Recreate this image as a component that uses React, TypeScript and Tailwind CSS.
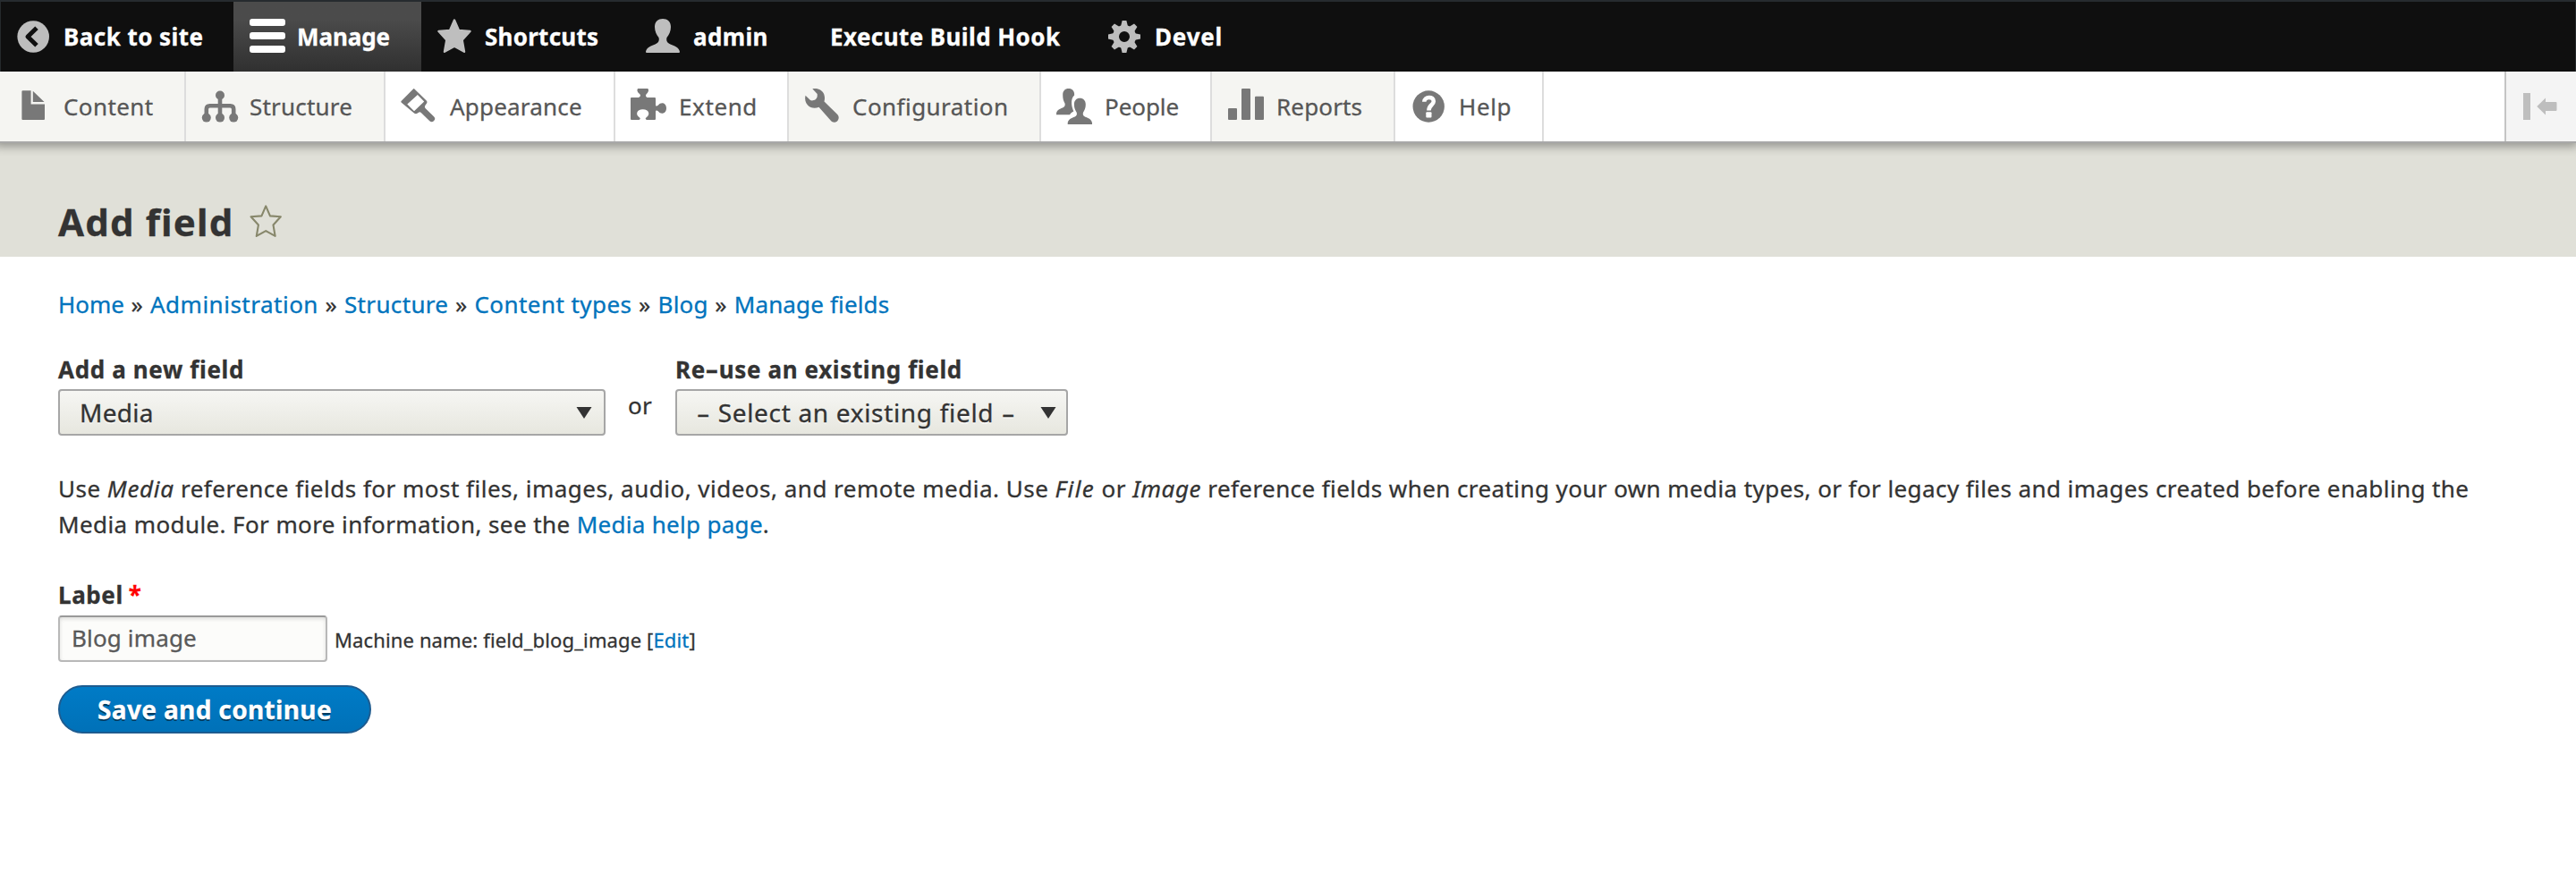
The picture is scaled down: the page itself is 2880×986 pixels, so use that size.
import type { ReactNode } from "react";

const Icon = ({ children, className = "" }: { children: ReactNode; className?: string }) => (
  <svg viewBox="0 0 40 40" className={"ml-[17px] mr-[14px] size-10 shrink-0 overflow-visible " + className} fill="currentColor">
    {children}
  </svg>
);

const STAR = "M20 1.5L25 13L37.5 14L28.7 23.6L31 36.8L20 30.6L9 36.8L11.3 23.6L2.5 14L15 13Z";

const bar = [
  {
    text: "Back to site",
    box: "w-[261px]",
    track: "tracking-[0.45px]",
    icon: (
      <Icon className="text-[#bebebe]">
        <circle cx="20.2" cy="20" r="17.8" />
        <path d="M24 10.3L14 20L24 29.7" fill="none" stroke="#0f0f0f" strokeWidth="5" strokeLinejoin="round" />
      </Icon>
    ),
  },
  {
    text: "Manage",
    box: "w-[210px] bg-linear-to-b from-[#4b4b4b] from-25% to-[#303030]",
    track: "tracking-[-0.1px]",
    icon: (
      <Icon>
        <rect x="1" y="0" width="40" height="8" rx="3" />
        <rect x="1" y="15" width="40" height="8" rx="3" />
        <rect x="1" y="30" width="40" height="8" rx="3" />
      </Icon>
    ),
  },
  {
    text: "Shortcuts",
    box: "w-[233px]",
    track: "tracking-[0.25px]",
    icon: (
      <Icon className="text-[#bebebe]">
        <path d={STAR} stroke="currentColor" strokeWidth="2.4" strokeLinejoin="round" />
      </Icon>
    ),
  },
  {
    text: "admin",
    box: "w-[187px]",
    track: "tracking-[0.34px]",
    icon: (
      <Icon className="text-[#bebebe]">
        <path d="M20 0c5 0 9 3 9 9c0 5-2 9-4.5 12c-.8 3 0 6 4 7.5c5 1.8 10 4 10.5 8.5q0 1-1 1H2q-1 0-1-1c.5-4.5 5.5-6.7 10.5-8.5c4-1.5 4.8-4.5 4-7.5C13 18 11 14 11 9c0-6 4-9 9-9z" />
      </Icon>
    ),
  },
  { text: "Execute Build Hook", box: "w-[329px] pl-[37px]", track: "tracking-[0.42px]", icon: null },
  {
    text: "Devel",
    box: "w-[180px]",
    track: "tracking-[0.8px]",
    icon: (
      <Icon className="text-[#bebebe]">
        <circle cx="20" cy="20" r="9.5" fill="none" stroke="currentColor" strokeWidth="7" />
        {[0, 45, 90, 135, 180, 225, 270, 315].map((a) => (
          <path key={a} d="M17.6 2H22.4L24.2 9.5H15.8Z" transform={`rotate(${a} 20 20)`} />
        ))}
      </Icon>
    ),
  },
];

const tray = [
  {
    text: "Content",
    box: "w-[208px] bg-[#f5f5f2]",
    track: "tracking-[0.4px]",
    icon: (
      <Icon>
        <path d="M7.4 3.3q0-1 1-1H17.6V17.5H33V34q0 1-1 1H8.4q-1 0-1-1ZM19.8 2.7L32.5 15H19.8Z" />
      </Icon>
    ),
  },
  {
    text: "Structure",
    box: "w-[223px] bg-[#f5f5f2]",
    track: "tracking-[0.2px]",
    icon: (
      <Icon>
        <circle cx="21" cy="7.5" r="5" />
        <circle cx="5.8" cy="32.6" r="5" />
        <circle cx="21" cy="32.6" r="5" />
        <circle cx="36.2" cy="32.6" r="5" />
        <path d="M21 8V32M5.8 31V23q0-3.8 3.8-3.8H32.4q3.8 0 3.8 3.8V31" fill="none" stroke="currentColor" strokeWidth="4.6" />
      </Icon>
    ),
  },
  {
    text: "Appearance",
    box: "w-[257px]",
    track: "pl-[1px] tracking-[0.2px]",
    icon: (
      <Icon>
        <path
          fillRule="evenodd"
          d="M14 .4q.7-.7 1.4 0L29 13.7q1 1.2 .2 2.6L27 19.6Q26.600 21 27.500 22L37 31.200A3.300 3.300 0 0 1 32.300 36.200L22.800 27Q21.500 25.800 20 26.700Q17.500 29 15.300 27.700L.6 15.500Q-.1 14.800 .6 14.100ZM18.900 6.900L7.300 17.600L15 25.200L26.200 14.500Z"
        />
      </Icon>
    ),
  },
  {
    text: "Extend",
    box: "w-[194px]",
    track: "tracking-[0.6px]",
    icon: (
      <Icon>
        <path d="M0 11q0-1 1-1H9C11.500 9 11.500 7 9.500 5.500C7 3.500 7 .5 8.500 0H19C20.500 .5 20.500 3.500 18.300 5.500C16.500 7 16.500 9 18.500 10H27q1 0 1 1V18c0 2 1.500 2 3 .5c3-4 9-2.500 9 3.500s-6 7.500-9 3.500c-1.500-1.500-3-1.500-3 .5V34q0 1-1 1H18C16 34 16.500 33 18 32C22 29.500 21 23.300 13.700 23.300S5.500 29.500 9.500 32C11 33 11.500 34 9.500 35H1q-1 0-1-1z" />
      </Icon>
    ),
  },
  {
    text: "Configuration",
    box: "w-[282px] bg-[#f5f5f2]",
    track: "tracking-[0.45px]",
    icon: (
      <Icon>
        <path d="M9.300 .3C15-1 20.500 1.500 22.300 6.500C23.300 9.500 23.200 12 22.500 14.500L37.300 29C39.500 31.300 39 35 36.700 36.700C34.500 38.300 31.500 37.800 30 36L16.500 20.800C12 22.500 7 21.800 4 18.500C1.500 16 .5 11.500 1.500 7.700L7 13C8.500 13.800 11 13.300 12.700 12.300C14.500 10.800 15 9 14.700 6z" />
      </Icon>
    ),
  },
  {
    text: "People",
    box: "w-[191px]",
    track: "tracking-[-0.06px]",
    icon: (
      <Icon>
        <path d="M26.300 10.700c4 0 6.500 2.700 6.500 7c0 4-1.200 6.500-2.800 9c-.6 2-.3 3.800 2.500 5c4 1.500 7.200 3 7.500 7V40H12.700V38.700c.3-4 3.500-5.500 7.500-7c2.800-1.200 3.100-3 2.500-5c-1.600-2.500-2.800-5-2.800-9c0-4.300 2.400-7 6.400-7z" />
        <path d="M13.700 0c4 0 6.400 2.700 6.400 6v1.500c-2.300 2.300-3.300 5-3 9.500c.2 3 1 5.500 2.200 8.500c-2 1-3 2-4.300 3.800H0V28c.3-3.500 3-5 7-6.500c2.800-1.200 3-3 2.500-5c-1.500-2.500-2.300-5-2.300-9.500c0-4.300 2.400-7 6.500-7z" />
      </Icon>
    ),
  },
  {
    text: "Reports",
    box: "w-[205px] bg-[#f5f5f2]",
    track: "pl-[1px] tracking-[0.15px]",
    icon: (
      <Icon>
        <rect x="1" y="22" width="10" height="13" rx="1" />
        <rect x="16" y="0" width="10" height="35" rx="1" />
        <rect x="31" y="8.700" width="10" height="26.300" rx="1" />
      </Icon>
    ),
  },
  {
    text: "Help",
    box: "w-[166px]",
    track: "tracking-[0.62px]",
    icon: (
      <Icon>
        <circle cx="20.200" cy="20" r="17.700" />
        <path d="M15.300 14.800C15.500 8.500 25.800 8.300 25.800 14.300C25.800 18.300 20.400 18.500 20.400 24.500" fill="none" stroke="#fff" strokeWidth="4.600" />
        <rect x="17.300" y="26.200" width="6.200" height="6.400" rx="1" fill="#fff" />
      </Icon>
    ),
  },
];

const crumbs = [
  { text: "Home", track: "tracking-[0px]" },
  { text: "Administration", track: "tracking-[0.5px]" },
  { text: "Structure", track: "tracking-[0.35px]" },
  { text: "Content types", track: "tracking-[0.45px]" },
  { text: "Blog", track: "tracking-[0.2px]" },
  { text: "Manage fields", track: "tracking-[0.15px]" },
];

const Arrow = () => (
  <svg viewBox="0 0 18 14" className="h-[14px] w-[18px] shrink-0" fill="#333">
    <path d="M.5 1H17.500L9 14Z" />
  </svg>
);

const Hyphen = ({ className }: { className: string }) => <span className={"inline-block scale-x-[1.65] " + className}>-</span>;

const Select = ({ className, children }: { className: string; children: ReactNode }) => (
  <div
    className={
      "flex h-[52px] items-center justify-between rounded-[4px] border-2 border-[#a6a6a6] bg-linear-to-b from-[#f6f6f3] to-[#e7e7df] text-[28px] leading-[48px] [text-shadow:0_2px_rgba(255,255,255,0.6)] " +
      className
    }
  >
    {children}
    <Arrow />
  </div>
);

export default function App() {
  return (
    <div className="h-[986px] w-[2880px] overflow-hidden bg-white font-['Noto_Sans','Open_Sans',sans-serif] text-[26px] leading-[40px] text-[#333] [-webkit-text-stroke:0.3px]">
      <nav className="flex h-20 border-t-2 border-[#262b2f] bg-[#0f0f0f] font-bold whitespace-nowrap text-white shadow-[inset_1px_0_0_#25292c,inset_-1px_0_0_#25292c]">
        {bar.map((b) => (
          <div key={b.text} className={"flex items-center " + b.box}>
            {b.icon}
            <span className={b.track}>{b.text}</span>
          </div>
        ))}
      </nav>
      <nav className="relative flex h-20 border-b-2 border-[#a8a8a8] bg-white whitespace-nowrap text-[#565656] shadow-[-2px_0_10px_4px_rgba(0,0,0,0.333)] [clip-path:inset(0_0_-30px_0)]">
        {tray.map((t) => (
          <div key={t.text} className={"flex items-center border-r-2 border-[#dddddd] " + t.box}>
            <div className="text-[#787878]">{t.icon}</div>
            <span className={t.track}>{t.text}</span>
          </div>
        ))}
        <div className="ml-auto flex w-20 items-center border-l-2 border-[#c4c4c4] bg-[#f4f4f4] pl-[19px]">
          <svg viewBox="0 0 40 30" className="h-[30px] w-10" fill="#bebebe">
            <path d="M0 0H8V30H0ZM15.300 15L25 5.500V10H36.500q1 0 1 1V19q0 1-1 1H25V24.500Z" />
          </svg>
        </div>
      </nav>

      <header className="flex h-[127px] items-center bg-[#e0e0d8] pt-[49px] pl-[65px]">
        <h1 className="text-[42px] leading-[50px] font-bold tracking-[1.15px]">Add field</h1>
        <svg viewBox="0 0 40 40" className="ml-[16px] size-10 overflow-visible" fill="none">
          <path d={STAR} transform="translate(1.200 1) scale(.95)" stroke="#87876b" strokeWidth="2.200" strokeLinejoin="round" />
        </svg>
      </header>

      <main className="px-[65px] pt-[33px]">
        <div className="whitespace-nowrap">
          {crumbs.map((c, i) => (
            <span key={c.text}>
              {i > 0 && <span className="tracking-[0.75px]"> » </span>}
              <a className={"text-[#0074bd] " + c.track}>{c.text}</a>
            </span>
          ))}
        </div>

        <div className="mt-[33px] flex">
          <div>
            <div className="h-[42px] font-bold tracking-[0.64px]">Add a new field</div>
            <Select className="w-[612px] pr-[13px] pl-[22px]">
              <span className="tracking-[0.3px]">Media</span>
            </Select>
          </div>
          <div className="mt-[40px] ml-[25px] w-[53px] tracking-[0.3px]">or</div>
          <div>
            <div className="h-[42px] font-bold tracking-[0.62px]">
              Re
              <Hyphen className="mx-[3px]" />
              use an existing field
            </div>
            <Select className="w-[439px] pr-[11px] pl-[25px]">
              <span className="tracking-[0.68px] whitespace-nowrap">
                <Hyphen className="mr-[3px]" /> Select an existing field <Hyphen className="ml-[4px]" />
              </span>
            </Select>
          </div>
        </div>

        <p className="mt-[39px] tracking-[0.49px] whitespace-nowrap">
          Use <em className="tracking-[0.7px]">Media</em> reference fields for most files, images, audio, videos, and remote media. Use{" "}
          <em className="tracking-[1.5px]">File</em> or <em className="tracking-[0.55px]">Image</em>{" "}
          <span className="tracking-[0.413px]">
            reference fields when creating your own media types, or for legacy files and images created before enabling the
          </span>
          <br />
          <span className="tracking-[0.4px]">
            Media module. For more information, see the{" "}
            <a className="tracking-[0.3px] text-[#0074bd]">Media help page</a>.
          </span>
        </p>

        <div className="mt-[39px] h-[43px] font-bold tracking-[0.6px]">
          Label<span className="ml-[6px] text-[#f00]">*</span>
        </div>
        <div className="flex h-[52px] items-center">
          <div className="h-[52px] w-[301px] rounded-[4px] border-2 border-[#b8b8b8] border-t-[#999] bg-[#fcfcfa] pl-[13px] leading-[47px] tracking-[0.15px] text-[#595959] shadow-[inset_0_2px_4px_rgba(0,0,0,0.125)]">
            Blog image
          </div>
          <div className="pt-[2px] pl-[8px] text-[22px] tracking-[0.13px]">
            Machine name: field_blog_image [<a className="text-[#0074bd]">Edit</a>]
          </div>
        </div>
        <button className="mt-[26px] block h-[54px] w-[350px] rounded-full border-2 border-[#1e5c90] bg-linear-to-b from-[#007bc6] to-[#0071b8] text-[28px] leading-[50px] font-bold tracking-[0.36px] text-white [text-shadow:0_2px_rgba(0,0,0,0.5)]">
          Save and continue
        </button>
      </main>
    </div>
  );
}
